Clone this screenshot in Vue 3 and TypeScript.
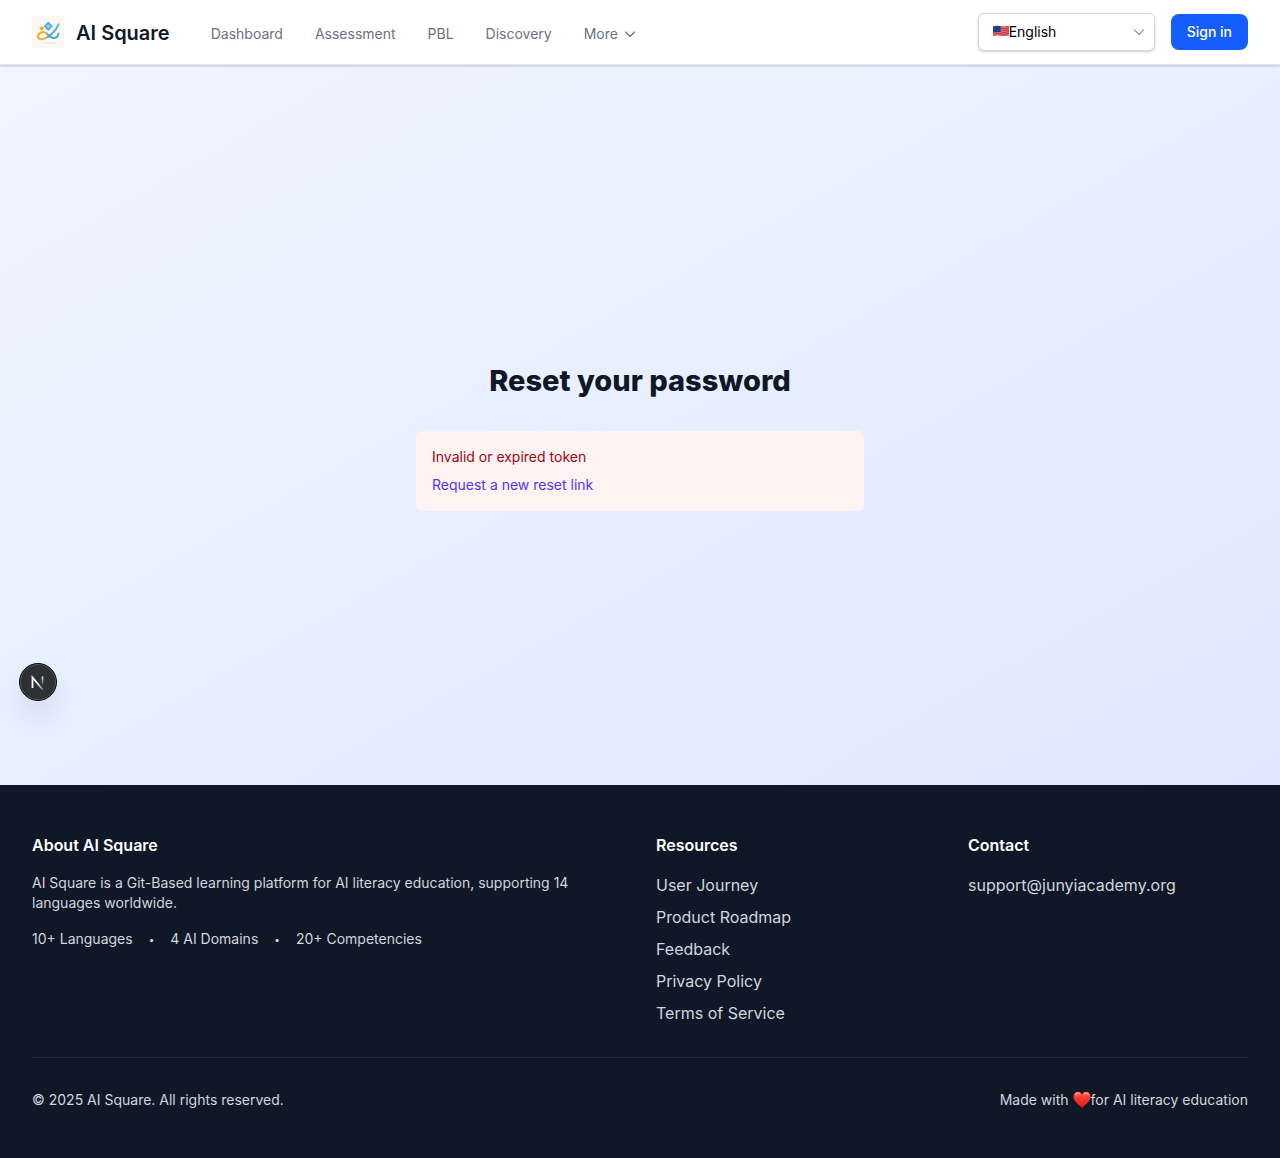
<script setup lang="ts">
import { ref } from 'vue'

interface LinkItem {
  label: string
  href: string
}

const navLinks: LinkItem[] = [
  { label: 'Dashboard', href: '#dashboard' },
  { label: 'Assessment', href: '#assessment' },
  { label: 'PBL', href: '#pbl' },
  { label: 'Discovery', href: '#discovery' },
]

const resources: LinkItem[] = [
  { label: 'User Journey', href: '#journey' },
  { label: 'Product Roadmap', href: '#roadmap' },
  { label: 'Feedback', href: '#feedback' },
  { label: 'Privacy Policy', href: '#privacy' },
  { label: 'Terms of Service', href: '#terms' },
]

const stats: string[] = ['10+ Languages', '4 AI Domains', '20+ Competencies']
const language = ref<string>('en')
</script>

<template>
  <div class="page">
    <header class="header">
      <a class="brand" href="#home">
        <svg class="brand-logo" viewBox="0 0 32 32" aria-hidden="true">
          <defs>
            <linearGradient id="swoosh" x1="5" y1="0" x2="28" y2="0" gradientUnits="userSpaceOnUse">
              <stop offset="0" stop-color="#f9a11b" />
              <stop offset=".36" stop-color="#f6ae3c" />
              <stop offset=".5" stop-color="#4a9fd8" />
              <stop offset="1" stop-color="#4fb4e0" />
            </linearGradient>
          </defs>
          <rect width="32" height="32" fill="#fbf7f2" />
          <ellipse cx="18" cy="27" rx="7" ry="1" fill="#f1ede8" />
          <path d="M26.500 8.500C24.500 14 16 23.500 8.500 23.200 4.500 22.800 5.500 17 11 16c4-.5 6 5.500 10 6 3 .3 5-1.500 5.500-4.500" fill="none" stroke="url(#swoosh)" stroke-width="2" stroke-linecap="round" />
          <path d="M16.300 5.500 21 10.200 16.300 15 11.600 10.200Z" fill="#48b4d3" />
          <path d="M16.300 8 18.500 10.200 16.300 12.500 14.100 10.200Z" fill="#8fd6ea" />
          <circle cx="9.800" cy="12.500" r="1.900" fill="#f9a826" />
        </svg>
        <span class="brand-name">AI Square</span>
      </a>
      <nav class="nav" aria-label="Main">
        <a v-for="item in navLinks" :key="item.label" class="nav-link" :href="item.href">{{ item.label }}</a>
        <button type="button" class="nav-link nav-more">
          More
          <svg class="chevron" viewBox="0 0 16 16" aria-hidden="true"><path d="M3.500 6 8 10.500 12.500 6" /></svg>
        </button>
      </nav>
      <div class="actions">
        <div class="language">
          <select v-model="language" class="language-select" aria-label="Language">
            <option value="en">English</option>
          </select>
          <svg class="flag" viewBox="0 0 17 12" aria-hidden="true">
            <defs>
              <clipPath id="flag-shape"><path d="M0 1.500C3-.5 6 .5 9 1s5 .5 8-.5v10c-3 1-5 1-8 .5s-6-1-9 .5Z" /></clipPath>
            </defs>
            <g clip-path="url(#flag-shape)">
              <path fill="#dc8c94" d="M0 0h17v12H0z" />
              <path stroke="#c92f41" stroke-width="1.200" fill="none" d="M0 1.500Q4 0 9 1t8-.5M0 3.500Q4 2 9 3t8-.5M0 5.500Q4 4 9 5t8-.5M0 7.500Q4 6 9 7t8-.5M0 9.500Q4 8 9 9t8-.5M0 11.500Q4 10 9 11t8-.5" />
              <path fill="#1f3a78" d="M0 0h8v7H0z" />
              <path stroke="#5d74a6" stroke-width=".5" stroke-dasharray=".6 1" d="M1 2.500h6M1 4h6M1 5.500h6" />
            </g>
          </svg>
          <svg class="chevron language-chevron" viewBox="0 0 16 16" aria-hidden="true"><path d="M3.500 6 8 10.500 12.500 6" /></svg>
        </div>
        <button type="button" class="sign-in">Sign in</button>
      </div>
    </header>

    <main class="main">
      <div class="panel">
        <h1 class="title">Reset your password</h1>
        <div class="alert" role="alert">
          <p class="alert-text">Invalid or expired token</p>
          <a class="alert-link" href="#forgot-password">Request a new reset link</a>
        </div>
      </div>
      <button type="button" class="dev-badge" aria-label="Open developer tools">
        <svg viewBox="0 0 38 38" aria-hidden="true">
          <defs>
            <linearGradient id="n-diagonal" x1="20" y1="20" x2="26" y2="28" gradientUnits="userSpaceOnUse">
              <stop stop-color="#fff" />
              <stop offset="1" stop-color="#fff" stop-opacity="0" />
            </linearGradient>
            <linearGradient id="n-stem" x1="0" y1="13" x2="0" y2="23" gradientUnits="userSpaceOnUse">
              <stop stop-color="#fff" />
              <stop offset="1" stop-color="#fff" stop-opacity="0" />
            </linearGradient>
          </defs>
          <circle cx="19" cy="19" r="18.500" fill="#2e3033" stroke="#08090a" />
          <circle cx="19" cy="19" r="17.500" fill="none" stroke="#505357" />
          <path d="M13.500 25V14.500L24 27" fill="none" stroke="url(#n-diagonal)" stroke-width="1.800" />
          <path d="M23.500 13.500v9" stroke="url(#n-stem)" stroke-width="1.600" />
        </svg>
      </button>
    </main>

    <footer class="footer">
      <div class="footer-grid">
        <section class="about">
          <h3 class="footer-title">About AI Square</h3>
          <p class="about-text">AI Square is a Git-Based learning platform for AI literacy education, supporting 14 languages worldwide.</p>
          <div class="stats">
            <template v-for="(stat, index) in stats" :key="stat">
              <span v-if="index > 0" class="dot">•</span>
              <span>{{ stat }}</span>
            </template>
          </div>
        </section>
        <section>
          <h3 class="footer-title">Resources</h3>
          <ul class="footer-links">
            <li v-for="item in resources" :key="item.label"><a :href="item.href">{{ item.label }}</a></li>
          </ul>
        </section>
        <section>
          <h3 class="footer-title">Contact</h3>
          <ul class="footer-links">
            <li><a href="mailto:support@junyiacademy.org">support@junyiacademy.org</a></li>
          </ul>
        </section>
      </div>
      <div class="footer-bottom">
        <p>© 2025 AI Square. All rights reserved.</p>
        <p class="made-with">
          <span>Made with</span>
          <svg class="heart" viewBox="0 0 18 18" role="img" aria-label="love">
            <defs>
              <linearGradient id="heart-fill" x1="0" y1="0" x2="0" y2="1">
                <stop stop-color="#ff6a5e" />
                <stop offset=".35" stop-color="#ff3b30" />
                <stop offset="1" stop-color="#e3170d" />
              </linearGradient>
            </defs>
            <path d="M9 17C6 13.500.5 10.500.5 5.500.5 2.500 2.500.8 4.800.8 6.800.8 8.300 2 9 3.500 9.700 2 11.200.8 13.200.8c2.300 0 4.300 1.700 4.300 4.700C17.500 10.500 12 13.500 9 17Z" fill="url(#heart-fill)" />
            <path d="M2.500 3.500Q4.500 1.200 6.800 2.800M11.200 2.800Q13.500 1.200 15.500 3.500" fill="none" stroke="#ffb3ab" stroke-width="1" stroke-linecap="round" />
          </svg>
          <span>for AI literacy education</span>
        </p>
      </div>
    </footer>
  </div>
</template>

<style>
body {
  margin: 0;
  background: #0a0a0a;
}
</style>

<style scoped>
.page {
  font-family: Inter, "Liberation Sans", sans-serif;
  font-size: 16px;
  line-height: 24px;
  color: #101828;
}

.page * {
  box-sizing: border-box;
}

h1,
h3,
p,
ul {
  margin: 0;
  padding: 0;
}

a {
  color: inherit;
  text-decoration: none;
}

button,
select {
  font: inherit;
  cursor: pointer;
}

.header {
  position: relative;
  z-index: 1;
  display: flex;
  align-items: center;
  height: 65px;
  padding: 0 32px;
  background: #fff;
  border-bottom: 1px solid #e5e7eb;
  box-shadow: 0 1px 3px rgba(0, 0, 0, 0.1), 0 1px 2px rgba(0, 0, 0, 0.1);
}

.brand {
  display: flex;
  align-items: center;
  gap: 12px;
}

.brand-logo {
  width: 32px;
  height: 32px;
}

.brand-name {
  padding-top: 2px;
  font-size: 20px;
  line-height: 28px;
  font-weight: 600;
}

.nav {
  display: flex;
  align-items: center;
  gap: 32px;
  margin-left: 41px;
  padding-top: 4px;
}

.nav-link {
  font-size: 14px;
  line-height: 20px;
  color: #6a7282;
}

.nav-more {
  display: flex;
  align-items: center;
  gap: 4px;
  padding: 0;
  border: 0;
  background: none;
}

.chevron {
  width: 16px;
  height: 16px;
  fill: none;
  stroke: currentColor;
  stroke-width: 1.3;
  stroke-linecap: round;
  stroke-linejoin: round;
}

.actions {
  display: flex;
  align-items: center;
  gap: 16px;
  margin-left: auto;
}

.language {
  position: relative;
}

.language-select {
  display: block;
  width: 177px;
  height: 38px;
  padding: 0 32px 0 30px;
  appearance: none;
  border: 1px solid #d1d5dc;
  border-radius: 6px;
  background: #fff;
  box-shadow: 0 1px 3px rgba(0, 0, 0, 0.1), 0 1px 2px rgba(0, 0, 0, 0.1);
  color: #000;
  font-size: 14px;
  line-height: 20px;
}

.flag {
  position: absolute;
  left: 15px;
  top: 12px;
  width: 16px;
  height: 12px;
  pointer-events: none;
}

.language-chevron {
  position: absolute;
  right: 8px;
  top: 11px;
  color: #99a1af;
  pointer-events: none;
}

.sign-in {
  height: 36px;
  padding: 0 16px;
  border: 0;
  border-radius: 8px;
  background: #155dfc;
  color: #fff;
  font-size: 14px;
  line-height: 20px;
  font-weight: 500;
}

.main {
  position: relative;
  display: flex;
  align-items: center;
  justify-content: center;
  min-height: 720px;
  padding: 48px 32px;
  background: linear-gradient(to bottom right, #eff6ff, #e0e7ff);
}

.panel {
  width: 100%;
  max-width: 448px;
}

.title {
  margin: 24px 0 32px;
  font-size: 29px;
  line-height: 36px;
  font-weight: 800;
  text-align: center;
}

.alert {
  display: flex;
  flex-direction: column;
  align-items: flex-start;
  gap: 8px;
  padding: 16px;
  border-radius: 6px;
  background: #fef2f2;
  font-size: 14px;
  line-height: 20px;
}

.alert-text {
  color: #9f0712;
}

.alert-link {
  color: #4f39f6;
}

.dev-badge {
  position: absolute;
  left: 19px;
  bottom: 84px;
  width: 38px;
  height: 38px;
  padding: 0;
  border: 0;
  border-radius: 50%;
  background: none;
  box-shadow: 0 16px 32px -8px rgba(0, 0, 0, 0.24);
}

.dev-badge svg {
  display: block;
}

.footer {
  padding: 48px 32px;
  background: #101828;
  color: #d1d5dc;
}

.footer-grid {
  display: grid;
  grid-template-columns: repeat(4, 1fr);
  gap: 32px;
}

.about {
  grid-column: span 2;
}

.footer-title {
  margin-bottom: 16px;
  font-size: 16px;
  line-height: 24px;
  font-weight: 600;
  color: #fff;
}

.about-text,
.stats {
  font-size: 14px;
  line-height: 20px;
}

.about-text {
  margin-bottom: 16px;
}

.stats {
  display: flex;
  gap: 16px;
}

.dot {
  font-size: 10px;
}

.footer-links {
  display: flex;
  flex-direction: column;
  gap: 8px;
  list-style: none;
}

.footer-bottom {
  display: flex;
  align-items: center;
  justify-content: space-between;
  margin-top: 32px;
  padding-top: 32px;
  border-top: 1px solid #1e2939;
  font-size: 14px;
  line-height: 20px;
}

.made-with {
  display: flex;
  align-items: center;
}

.heart {
  width: 18px;
  height: 18px;
  margin-left: 4px;
}
</style>
